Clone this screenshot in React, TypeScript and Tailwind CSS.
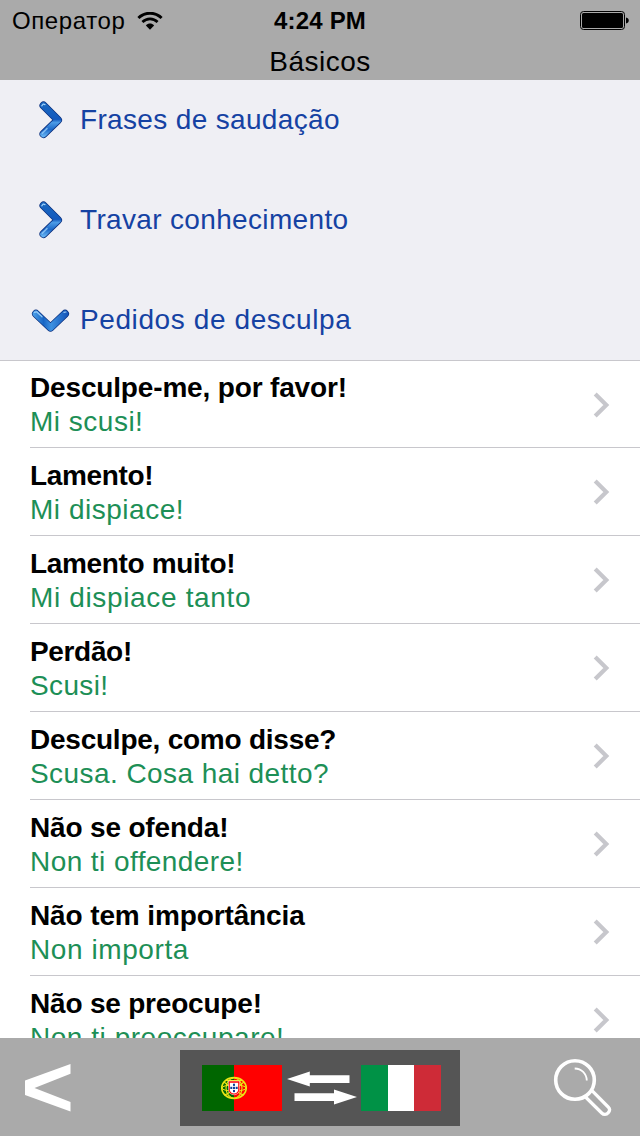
import React from 'react';

const SECTIONS = [
  { title: 'Frases de saudação', open: false, className: 'tracking-[0.34px]' },
  { title: 'Travar conhecimento', open: false, className: 'tracking-[0.34px]' },
  { title: 'Pedidos de desculpa', open: true, className: 'tracking-[0.6px]' },
];

const PHRASES = [
  { source: 'Desculpe-me, por favor!', target: 'Mi scusi!', sourceClass: 'tracking-[-0.16px]', targetClass: 'tracking-[0.5px]' },
  { source: 'Lamento!', target: 'Mi dispiace!', sourceClass: 'tracking-[-0.36px]', targetClass: 'tracking-[0.52px]' },
  { source: 'Lamento muito!', target: 'Mi dispiace tanto', sourceClass: 'tracking-[-0.34px]', targetClass: 'tracking-[0.65px]' },
  { source: 'Perdão!', target: 'Scusi!', sourceClass: 'tracking-[-0.34px]', targetClass: 'tracking-[0.35px]' },
  { source: 'Desculpe, como disse?', target: 'Scusa. Cosa hai detto?', sourceClass: 'tracking-[-0.24px]', targetClass: 'tracking-[0.43px]' },
  { source: 'Não se ofenda!', target: 'Non ti offendere!', sourceClass: 'tracking-[-0.17px]', targetClass: 'tracking-[0.43px]' },
  { source: 'Não tem importância', target: 'Non importa', sourceClass: 'tracking-[-0.12px]', targetClass: 'tracking-[0.58px]' },
  { source: 'Não se preocupe!', target: 'Non ti preoccupare!', sourceClass: 'tracking-[-0.2px]', targetClass: 'tracking-[0.53px]' },
];

const WifiIcon = () => (
  <svg className="h-[18px] w-[26px]" viewBox="0 0 26 18" fill="none" stroke="#000">
    <path d="M1.4 6C8 -0.4 18 -0.4 24.6 6" strokeWidth="2.9" />
    <path d="M5.4 10C9.8 5.8 16.2 5.8 20.6 10" strokeWidth="2.7" />
    <path d="M8.9 13.4C11.3 11 14.7 11 17.1 13.4L13 17.8Z" fill="#000" stroke="none" />
  </svg>
);

const BatteryIcon = () => (
  <svg className="h-5 w-[50px]" viewBox="0 0 50 20">
    <rect x="0.5" y="0.5" width="44" height="18" rx="3" fill="none" stroke="#000" />
    <rect x="2" y="2" width="41" height="15" rx="1.5" />
    <path d="M46 6.5C49.7 7 49.7 12 46 12.5Z" />
  </svg>
);

const BlueArrow: React.FC<{ open: boolean }> = ({ open }) => (
  <svg className="h-10 w-10 shrink-0" viewBox="0 0 40 40" fill="none" strokeLinecap="round" strokeLinejoin="round">
    <defs>
      <linearGradient id="arrow-right" x1="0" y1="4" x2="0" y2="36" gradientUnits="userSpaceOnUse">
        <stop offset="0" stopColor="#1a68c0" />
        <stop offset="0.48" stopColor="#1459bd" />
        <stop offset="0.58" stopColor="#4b9be6" />
        <stop offset="0.8" stopColor="#1c68c8" />
        <stop offset="1" stopColor="#62b1f2" />
      </linearGradient>
      <linearGradient id="arrow-down" x1="3" y1="0" x2="38" y2="0" gradientUnits="userSpaceOnUse">
        <stop offset="0" stopColor="#4b9fe8" />
        <stop offset="0.3" stopColor="#1765c4" />
        <stop offset="0.52" stopColor="#3d91e1" />
        <stop offset="1" stopColor="#1454b8" />
      </linearGradient>
    </defs>
    {open ? (
      <>
        <path d="M6 13.8L20.5 27.6L35 13.8" stroke="#0b2f7d" strokeWidth="8" />
        <path d="M6 13.8L20.5 27.6L35 13.8" stroke="url(#arrow-down)" strokeWidth="6.6" />
        <path d="M4.6 12.4L6.6 11.8L12 16.8M34 12.3L36 12" stroke="#b5e0ff" strokeWidth="1.2" opacity="0.8" />
      </>
    ) : (
      <>
        <path d="M13.5 5.5L28 20L13.5 34" stroke="#0b2f7d" strokeWidth="8" />
        <path d="M13.5 5.5L28 20L13.5 34" stroke="url(#arrow-right)" strokeWidth="6.6" />
        <path d="M11.8 5.8L13.2 4L15 4.6" stroke="#b5e0ff" strokeWidth="1.2" opacity="0.9" />
        <path d="M12.3 33.2L17 28.6" stroke="#a8daff" strokeWidth="1.5" opacity="0.7" />
      </>
    )}
  </svg>
);

const Chevron = () => (
  <svg className="mt-px h-7 w-[17px] shrink-0" viewBox="0 0 17 28" fill="none" stroke="#c7c7cc" strokeWidth="4.2">
    <path d="M2.2 3L13.3 14L2.2 25" />
  </svg>
);

const PortugalFlag = () => (
  <svg className="h-[46px] w-20" viewBox="0 0 80 46">
    <path d="M0 0H32V46H0Z" fill="#006600" />
    <path d="M32 0H80V46H32Z" fill="#ff0000" />
    <g fill="none" stroke="#ece516">
      <ellipse cx="32" cy="23" rx="12.2" ry="10.5" strokeWidth="1.7" />
      <ellipse cx="32" cy="23" rx="12" ry="3.2" strokeWidth="1" />
      <ellipse cx="32" cy="23" rx="8" ry="10" strokeWidth="1.1" />
      <path d="M22 17C27 21 37 29 42 30M42 17C37 21 27 29 22 30M23 15.5H41" strokeWidth="1.2" />
    </g>
    <path d="M26.5 16H37.5V24.5C37.5 31.5 26.5 31.5 26.5 24.5Z" fill="#ff0000" stroke="#fff" strokeWidth="0.5" />
    <path d="M27.8 17.8H36.2V24.5C36.2 29.7 27.8 29.7 27.8 24.5Z" fill="#fff" />
    <g fill="#123f99">
      <rect x="31" y="18.7" width="2" height="2.2" />
      <rect x="28.3" y="21.8" width="2" height="2.2" />
      <rect x="31" y="21.8" width="2" height="2.2" />
      <rect x="33.7" y="21.8" width="2" height="2.2" />
      <rect x="31" y="24.9" width="2" height="2.2" />
    </g>
  </svg>
);

const SwapIcon = () => (
  <svg className="mr-1 ml-[5px] h-[34px] w-[70px]" viewBox="0 0 70 34" fill="#fff">
    <path d="M0 8L22.8 0.6V4.2H62.5V12H22.8V15.4Z" />
    <path d="M70 26L47 18.5V22.2H7.5V30H47V33.5Z" />
  </svg>
);

const SearchIcon = () => (
  <svg className="h-[60px] w-[60px]" viewBox="0 0 60 60" fill="none" stroke="#fff">
    <circle cx="22" cy="22" r="19.3" strokeWidth="3.6" />
    <path d="M21.7 10.5C28.5 10.7 33.5 15.5 33.8 22.5" strokeWidth="1.8" />
    <path d="M32.5 39L48.7 55C50.6 56.9 53.5 56.9 55 55C57 53 57 50.8 55.2 49L39 32.7" strokeWidth="3.2" />
  </svg>
);

export default function App() {
  return (
    <div className="flex h-[1136px] w-[640px] flex-col overflow-hidden bg-white font-['Liberation_Sans',sans-serif] text-black">
      <header className="h-20 shrink-0 bg-[#aaaaaa]">
        <div className="grid h-[42px] grid-cols-3 items-center px-3 text-2xl">
          <div className="flex items-center gap-3">
            <span className="tracking-[0.6px]">Оператор</span>
            <WifiIcon />
          </div>
          <span className="text-center font-bold tracking-[0.2px]">4:24 PM</span>
          <div className="-mr-[2px] flex justify-end">
            <BatteryIcon />
          </div>
        </div>
        <h1 className="text-center text-[28px] leading-10 tracking-[0.5px]">Básicos</h1>
      </header>

      <main className="min-h-0 flex-1 overflow-hidden">
        <div className="h-[281px] border-b border-[#c8c7cc] bg-[#efeff4]">
          {SECTIONS.map(section => (
            <div key={section.title} className="flex h-[100px] items-start pl-[30px]">
              <div className="flex h-20 items-center gap-[10px]">
                <BlueArrow open={section.open} />
                <span className={`text-[28px] text-[#1542a3] ${section.className}`}>{section.title}</span>
              </div>
            </div>
          ))}
        </div>
        <ul className="pl-[30px]">
          {PHRASES.map(phrase => (
            <li key={phrase.source} className="flex h-[88px] items-center justify-between border-b border-[#c8c7cc] pr-[30px] first:h-[87px]">
              <div className="pt-[2px] text-[28px] leading-[34px]">
                <p className={`font-bold ${phrase.sourceClass}`}>{phrase.source}</p>
                <p className={`text-[#1d8f56] ${phrase.targetClass}`}>{phrase.target}</p>
              </div>
              <Chevron />
            </li>
          ))}
        </ul>
      </main>

      <footer className="grid h-[98px] shrink-0 grid-cols-[1fr_280px_1fr] items-center bg-[#aaaaaa] pt-[2px]">
        <div className="pl-[25px]">
          <svg className="h-12 w-[46px]" viewBox="0 0 46 48" fill="#fff">
            <path d="M45.5 0V9.7L9.5 24L45.5 38V47.5L0 31V16.5Z" />
          </svg>
        </div>
        <div className="flex h-[76px] items-center bg-[#555555] pl-[22px]">
          <PortugalFlag />
          <SwapIcon />
          <div className="flex h-[46px] w-20">
            <div className="flex-1 bg-[#009246]" />
            <div className="flex-1 bg-white" />
            <div className="flex-1 bg-[#ce2b37]" />
          </div>
        </div>
        <div className="flex justify-end pr-[27px]">
          <SearchIcon />
        </div>
      </footer>
    </div>
  );
}
